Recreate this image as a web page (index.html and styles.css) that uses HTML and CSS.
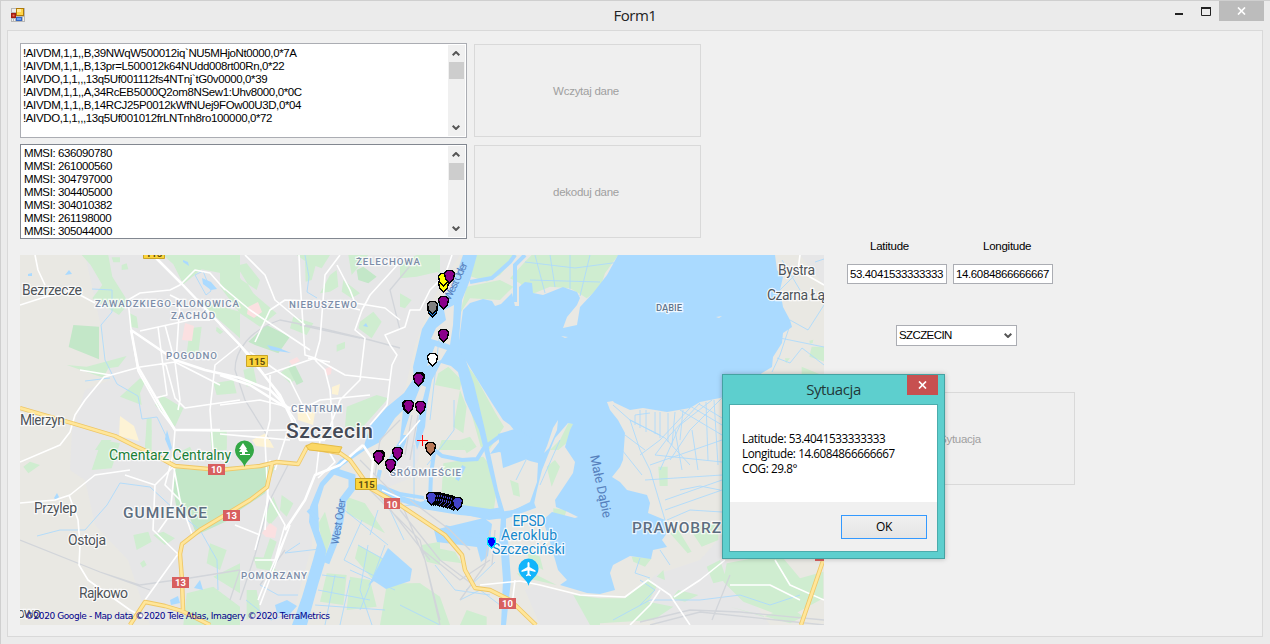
FILE: index.html
```html
<!DOCTYPE html>
<html lang="pl">
<head>
<meta charset="utf-8">
<title>Form1</title>
<link rel="stylesheet" href="styles.css">
</head>
<body>
<div class="window">
  <header class="titlebar">
    <svg class="app-icon" width="14" height="14" viewBox="0 0 14 14"><path fill="#b8b8b8" d="M0 0h14v14H0z"/><path fill="#eee" d="M1 1h4v3H1zM1 11h1v2H1zM3 11h1v2H3zM12 9h1v4h-1z"/><path fill="#a11c10" d="M0 5h5v5H0z"/><path fill="#f26a55" d="M1.500 6.500h2v2h-2z"/><path fill="#b07a08" d="M5 0h8v8H5z"/><path fill="#ffd54a" d="M6 1h6v6H6z"/><path fill="#ffeaa0" d="M6 1h4v3H6z"/><path fill="#3567c4" d="M5 9h6v4H5z"/><path fill="#6fa2ef" d="M6 10h4v2H6z"/></svg>
    <h1 class="title">Form1</h1>
    <div class="controls">
      <svg width="50" height="20" viewBox="0 0 50 20"><path fill="#222" d="M6 12h8v2H6z"/><path fill="none" stroke="#222" d="M32.500 7v7.500h9V7"/><path fill="#222" d="M32 6h10v2H32z"/></svg>
      <span class="close"><svg width="9" height="8" viewBox="0 0 9 8"><path d="M1 .5l7 7M8 .5l-7 7" stroke="#fff" stroke-width="1.700"/></svg></span>
    </div>
  </header>
  <main class="client">
    <section class="left">
      <div class="io-row">
        <div class="box">
          <div class="lines"><p>!AIVDM,1,1,,B,39NWqW500012iq`NU5MHjoNt0000,0*7A</p><p>!AIVDM,1,1,,B,13pr=L500012k64NUdd008rt00Rn,0*22</p><p>!AIVDO,1,1,,,13q5Uf001112fs4NTnj`tG0v0000,0*39</p><p>!AIVDM,1,1,,A,34RcEB5000Q2om8NSew1:Uhv8000,0*0C</p><p>!AIVDM,1,1,,B,14RCJ25P0012kWfNUej9FOw00U3D,0*04</p><p>!AIVDO,1,1,,,13q5Uf001012frLNTnh8ro100000,0*72</p></div>
          <div class="scroll"><svg class="arrow" viewBox="0 0 8 5"><path d="M.7 4.200L4 1l3.300 3.200"/></svg><i class="thumb"></i><svg class="arrow" viewBox="0 0 8 5"><path d="M.7.800L4 4 7.300.8"/></svg></div>
        </div>
        <button class="btn" disabled>Wczytaj dane</button>
      </div>
      <div class="io-row">
        <div class="box list">
          <div class="lines mmsi"><p>MMSI: 636090780</p><p>MMSI: 261000560</p><p>MMSI: 304797000</p><p>MMSI: 304405000</p><p>MMSI: 304010382</p><p>MMSI: 261198000</p><p>MMSI: 305044000</p></div>
          <div class="scroll"><svg class="arrow" viewBox="0 0 8 5"><path d="M.7 4.200L4 1l3.300 3.200"/></svg><i class="thumb"></i><svg class="arrow" viewBox="0 0 8 5"><path d="M.7.800L4 4 7.300.8"/></svg></div>
        </div>
        <button class="btn" disabled>dekoduj dane</button>
      </div>
      <svg class="map" viewBox="20 255 804 370">
        <defs>
          <path id="ship" d="M-3-6H3L5-3 4 2.500 0 6.500-4 2.500-5-3z"/>
        </defs>
        <rect x="20" y="255" width="804" height="370" fill="#e9e8e3"/>
        <!-- built-up areas -->
        <g class="urban">
          <path d="M85 255H460L432 300 415 345 405 390 385 425 340 465 312 500 312 545 290 625H150L128 560 95 525 85 480 70 470 72 430 85 390 110 380 105 345 95 300z"/>
          <path d="M735 520L700 560 655 575 640 590 625 605 660 625H770L745 590 725 560zM525 590L535 585 595 600V625H540z"/>
          <path d="M780 255h20l24 30v-30zM415 405l15 5-12 50-12 20-25 10 5-25z"/>
        </g>
        <!-- parks and meadows -->
        <g transform="translate(20 250) scale(.33333)" class="green">
          <path class="forest" d="M160 225l77 5v98l-91-37z"/>
          <path d="M172 0h90l15 80 50 80-30 35-80-50 30-40-35-60zM140 345l60 5 120-32-25 32-30 5-15 28zM430 15h230v130l-55-75-60-12-55 45-30-60zM530 150l130 35v80zM300 440l60-55 15 10-15 35 5 35zM425 435l65 40-25 55-60-65zM330 190l20 10 5 35-25-5zM510 235l35-5-10 80-35 0zM580 400l60-10 10 40-60 5zM570 550h50v50h-45zM380 505h15v95h-20z"/>
          <path d="M275 22l25 0 0 15-20 0zM305 45l15-5 5 18-20 2zM245 570l30 0-30 30h-20zM590 230l20 15-10 8-12-10z"/>
        </g>
        <g transform="translate(220 250) scale(.33333)" class="green">
          <path d="M0 15h30l70 115 70 60-50 40-60-40L0 110zM35 50l30 40 45 30 10-30-40-50zM255 35l15-15 20 15-15 55-18 5zM330 75l20-15 5 50-25 15-30 5zM370 90l50 40-25 15-30-20zM420 215l40-30 25 30-30 50-40-30zM220 200l60 20-20 35-50-20zM230 15h100l-25 40-40-15zM385 15h60l-50 60zM350 285l25-10v20l-25 10zM380 470l90-35 35 10-80 90-50-5zM180 370l30-25 30 35-30 20zM70 360l30-10 10 50-30 10z"/>
          <path class="forest" d="M140 225l70 35-35 50-70-25-20-10zM410 60l20-10 40 30-25 20-30-10zM205 355l20-10 25 50-20 10z"/>
          <path d="M630 15h30v60l-20-30zM500 500l40-30 20 0-80 75z"/>
        </g>
        <g transform="translate(400 250) scale(.33333)" class="green">
          <path d="M0 40l50-25h55l10 50-65 15-50 5zM0 130l35 20-20 25-15-5zM230 15h120l-50 60-40 20-60-20zM375 35l20-20h260l-40 55-15 45-40 30-15-10-35-20-60-5-60 25-30-35-30-15zM200 110l100-20 40 20-40 40-90-5-30 45zM172 305l55 75 60 110 25 40-45 70-25-10-50-180zM115 370l30-20 40 40-5 30-75-15zM180 420l20 50-10 80-30-20zM125 570h80v30h-90zM505 520l15 0-10 50-35 30h-25l30-30z"/>
        </g>
        <g transform="translate(600 250) scale(.33333)" class="green">
          <path d="M0 15h45L15 65 0 95zM635 290l38 0v45l-45-15zM605 350l60 25h-60zM628 272l12-3-2 10-8 2zM555 325l15 0-12 15z"/>
        </g>
        <g transform="translate(20 430) scale(.33333)" class="green">
          <path class="forest" d="M465 115l195 15v125l-130 60-20-50-40-30-10-55z"/>
          <path d="M245 30l55 10-25 75-60 5zM380 0h15l-5 60-15-10zM480 65l30-15 15 30-30 15zM570 0h50v55l-40-20zM10 110l20-15 30 10-35 25zM340 315l45-10 10 30-45 25zM400 315l30-10 35 20-30 20zM570 340l50 20-20 60-40-20zM500 490l80-20 80 60v55h-170zM580 440l80-40v90zM360 400l12-10 8 15-12 8z"/>
        </g>
        <g transform="translate(220 430) scale(.33333)" class="green">
          <path class="forest" d="M0 110l165 0-30 80-75 50H0z"/>
          <path d="M380 200l55 20 60 90-115-60zM415 345l90 50-50 50-50-60zM320 430l60 5-10 90-70-10zM390 440l60 10 20 80-90 10zM500 465l100-5 60 60v65H480zM315 245l20 75-20 60-20-100zM185 195l35 25-20 40-20-20zM130 260l30-60 20 50-30 35zM150 325l20 10-20 60-20-10zM605 345l55-10v70l-40-10zM80 480h30l10 60-40 30zM100 380l50 5 20 40-60-10z"/>
        </g>
        <g transform="translate(400 430) scale(.33333)" class="green">
          <path d="M130 100l60-10 60-10 15 20 25 80-10 70-80-15-75-50zM0 460h60l60 40 30 85H0zM65 345l100 20 20 35-70-10zM180 30l30-10 20 30-30 20zM360 30l25 40-20 10zM440 110l25-20 15 20-25 60zM330 150l25 10 5 40-20-5zM460 235l40 5-10 30-30-10zM380 360l40 20 10 40-40-20zM520 495l80 10v80h-30zM200 540l60 20v25h-80zM345 250l20 10-15 25zM350 430l60 5 60 30-110-25z"/>
        </g>
        <g transform="translate(600 430) scale(.33333)" class="green">
          <path d="M175 110h28v58h-24zM210 310l25-10 40 65-12 5zM265 290l90-10v50l-50 20zM95 380l60 5-20 25-35-15zM320 410l40-20 20 60-40 10zM0 505h75l70-60 25 25-25 45 75 15-60 40-160 10zM235 480l60 15-40 20-40-10zM380 400l80-15 90 0 50 60 70-20v80l-110 60-130-50-60-60zM390 530l100 30 80-30 40 30-40 20zM170 440l20-20 5 30z"/>
        </g>
        <!-- hospital and shopping areas -->
        <g>
          <path class="pink" d="M185 323l9 3-2 15-10-1zM248 307l10-5 4 10-8 6-7-4zM289 361l8-4 3 4-8 4zM325 369l7-3-1 8-5 2zM262 533l8-10 7 5-2 10-9-1z"/>
          <path class="yellow" d="M120 416l14 10 5 15-20-5zM297 407l18 6-2 12-15-5zM332 387l8-3-2 11-6-1zM252 440l14-7 8 15-18-2z"/>
        </g>
        <!-- lake and rivers -->
        <g class="water">
          <path d="M463 255H477L470 280 462 300 459 340 474 384 485 430 498 490 506 517 506 540 499 545 501 517 489 470 479 430 465 400 458 372 451 366 441 363 432 380 427 405 425 427 417 450 415 440 419 415 422 395 413 408 406 442 392 475 386 463 400 440 403 410 395 418 380 442 365 450 342 466 324 486 318 505 319 530 326 550 325 562 318 585 307 625H292L302 597 313 560 317 545 309 522 310 507 320 483 340 460 363 449 370 426 387 407 404 393 414 378 413 367 422 329 438 303 452 287z"/>
          <path d="M458 348L463 310 470 303 483 299 492 301 495 306 501 304 512 293 515 306H519V287L525 282 532 283 533 293 543 295 563 287 577 292 580 298 577 305 567 317 563 328 577 325 580 307 593 293 607 275 618 255H775L777 270 783 277 780 290 783 307 790 320 792 327 783 333 782 343 773 357 772 367 762 373 735 395 700 402 690 408 667 412 643 408 630 410 613 402 607 402 610 410 618 420 625 433 623 460 620 467 612 477 620 482 627 490 647 495 650 503 648 513 665 520 667 533 662 540 667 547 653 550 651 559 630 556 613 565 610 573 615 590 600 594 587 593 560 585 567 580 558 570 550 542 543 520 552 512 575 518 578 517 568 512 556 507 555 500 573 473 575 462 565 447 570 430 573 424 568 423 555 438 548 455 542 470 537 490 534 504 511 515 498 512 514 510 530 502 537 482 538 463 530 461 515 455 499 452 490 454 500 441 518 435 510 425 503 420 492 403 477 379z"/>
          <path d="M498 434l20-6 15 12-6 19-24 9z"/>
          <path d="M390 509l34-8v-5L400 492 380 484 372 486 382 493zM388 548l24 21-2 12-24 8-12-8-6 5zM400 496l90 13 13-2v11l-14 2-70-15-30 2zM434 530l50-12 8 6-4 32-7 6-4-15-40-5zM500 540h8l3 40-5 45h-5l2-45z"/>
          <path class="river" stroke-width="7" d="M334 471L352 477 352 488 343 500 340 521 334 543 326 563"/>
          <path class="river" stroke-width="6" d="M374 488L395 497 424 506 460 512 505 516 535 505"/>
          <path class="river" stroke-width="4" d="M432 448L442 456 462 460 477 459 484 448 500 436M434 453L431 475 430 500M470 282L492 278 510 262 515 255M515 302V265L525 255M445 527L475 536 490 535M308 510L318 520M380 470L378 479M464 466L457 480"/>
          <path d="M65 275l4-5 3 4zM28 274l4-1v3h-4zM183 260l5 2 1 4-6-4zM202 278l9 4 6 7-6 1-8-6zM267 345l12 3 12 5-20-3zM275 605l12-5 10 6-8 9-12-2zM54 498l3-5 2 4-3 3zM167 430l5 18-2 3-5-12zM170 600l8-4 2 7-9 2zM194 588l6-8 3 10zM363 326l3-3 2 4z"/>
        </g>
        <!-- islands -->
        <g class="land">
          <path d="M436 328l10-8-2-10 10-5-1 20-3 20-8-3-11-3zM427 366l8-20 12 4-6 10zM421 385l5 2-3 12-8 14-6 22-6 0 10-30z"/>
          <path d="M547 446l6-18 5-8-1 10-8 18-5 5zM716 317l6-1-3 2zM607 402l6-1 8 12-9-6zM808 402l6 2 10 15-12-10zM561 336l7 1-3 1z"/>
        </g>
        <!-- streams and canals -->
        <g class="stream">
          <path d="M92 289L112 290 112 312 101 325 105 360 117 384 138 396 142 419 157 417 168 440M85 381L110 378M195 275l8-4 8 20-5 4zM37 536L60 530 85 530 107 505 120 483 150 487 175 510 200 530 217 560 218 590M305 255l4 22-2 15 10 6"/>
          <path d="M342 508L388 545M362 520L344 560 378 578M378 510L370 535M358 545L385 560M350 570L395 590M322 575L345 578M318 590L370 600M315 605L385 610M335 575L325 625M350 580L340 625M368 545L360 590 372 625M385 545L372 580 360 610M300 543L285 553 320 549M260 585l18 10 20 0M246 600l25 20 15-5"/>
          <path d="M404 540L390 510M414 445v60M454 400v30l-15 20-12 15M440 330L430 420M525 262L575 268 620 262M535 255L545 293M550 255L555 287M570 255V289M590 255L580 296M530 280L600 282M466 590L495 562M400 605L440 625M435 565L455 590 490 595M560 555l-15-10M516 480l10-20M540 485l20-45M460 600l20-10 20 15"/>
          <path d="M613 405L630 420 665 438 690 465M630 420L640 450 650 470 665 520M630 420L660 435M650 413L635 415 635 425M660 412V438M668 413V442M675 412L672 445M683 410L680 440M690 408L660 440 640 455M700 403L670 435 655 455M712 400L680 425 660 470M722 398L690 430 670 460M680 410L722 435M690 406L722 425M655 455L722 462M650 465L722 440M645 480L722 475M625 435L645 450M622 450L642 475M665 500L722 480M665 510L722 490M667 520L690 510 722 512M680 490l20-4 20 4M640 410v18M646 410v22M655 412v22M699 404L722 418M706 402L708 460M714 400L718 465M692 430L698 470M675 430L682 470"/>
          <path d="M790 320L808 330 824 305M790 325L780 355 772 372M780 338L824 347M777 358L790 363 802 348 824 365M800 290l-18-30M815 262l9-3M780 290L795 275M613 620L650 600 700 600 740 595 770 605 800 595M640 580l15 10-15 15M640 558l-5 15 15 5M660 550l10 15"/>
        </g>
        <!-- railways -->
        <g class="rail">
          <path d="M20 540L100 572 140 585 190 578 240 570M100 572L150 590M240 570L230 600M235 370C235 350 250 330 280 320L320 328 370 340 400 348M400 330L390 290 415 260M235 370L245 400 270 440M360 460L400 500 425 560 440 625M370 490L420 540 440 620M375 490L430 560M405 455L412 415M410 460L418 415M400 510L440 560 480 590M420 548L460 580 490 560M490 530L485 565 460 600M495 530L492 565M410 500L450 530 470 550M640 622L690 610 740 612 824 620M650 625L700 612 824 625M730 575L712 620M375 475L380 440 400 420"/>
          <path d="M300 325L360 338M285 550L260 585M288 465L270 500 255 555 240 600"/>
        </g>
        <!-- minor streets -->
        <g class="street">
          <path d="M20 305L45 297 65 293 80 295 95 303M35 255L38 270 45 285M20 503L55 500 70 495 95 475 130 470M69 495L78 520 80 545 79 565 88 580 130 610 145 618M80 370L110 375M20 462L60 445 70 432 75 415 85 400 104 377 140 367 175 362 220 385"/>
          <path d="M131 329L138 371 160 410 175 430 173 455 165 485 180 500 193 537M175 430L220 431 290 430M131 329L128 300 140 293 170 290 180 285 195 270 210 273 225 290M140 331L190 320 210 320M165 325L175 362 180 400 178 410M158 327L163 366 167 395 155 398M170 295L180 300 176 362M160 364L166 365 175 398 185 408 240 400M240 345L215 365 210 410 213 450"/>
          <path d="M245 255L265 275 275 300 305 325M299 255L300 280 305 355 315 358 320 340 325 275 340 255M337 265L350 290 355 303 385 308 400 320M362 310L355 330 365 338 360 380 340 400 325 440M362 310L370 295 400 262M220 285L250 310 310 350M220 325L250 355 275 390 295 420 300 440M255 342L270 310 285 300 330 302 360 310M250 352L290 380 310 420M315 358L345 375 390 380M315 358L265 375M315 360L325 370 330 390 333 430M270 375L270 420 265 440 268 500 255 550M220 405L260 400 300 410 320 400 370 395M308 358L330 362M390 380L392 365 397 355 390 345 385 335 405 327 410 310 420 310 430 290 445 275 452 255M390 380L387 405 370 425"/>
          <path d="M175 465L155 485 153 530 178 554 145 600M125 475L155 485M173 463L180 500M175 465L170 515 158 532M288 430L275 470M220 434L290 440M320 440L316 475M268 495L285 525 275 560 255 560M290 525L275 565 260 605M270 460L265 530M288 530L262 590 258 600M235 525L260 535M318 478L335 462 325 445"/>
          <path d="M480 585L520 581 540 585 580 595 625 597 648 580 670 595 690 625M674 597L700 580 725 560M660 590L650 605 630 625M775 560L790 585 824 600M800 255L798 270 824 285M515 580L512 605M730 585L770 585 800 600M399 445L420 420M382 490L400 498"/>
        </g>
        <g class="main">
          <path d="M155 257L182 284 240 345 260 370 280 395 292 420 300 440 325 440M131 330L175 360 205 370 240 378 270 390 290 410M131 330L138 367 160 405 175 430H220M363 445L373 460 370 490M220 375L250 385 290 410M363 445L340 465 315 475 305 500 285 530"/>
        </g>
        <!-- highways -->
        <g class="highway">
          <path id="hw" d="M20 408L75 424 115 436 135 446 155 455 175 466 220 470 260 466 277 462 298 464 307 447 340 453 350 460 370 488 400 505 445 535 462 555 465 570 475 588 490 590 510 600 536 625M272 464L267 487 250 500 200 530 182 544 180 554 182 580 183 610M130 625L145 602 165 606 182 611 210 625M824 558L801 625"/>
          <use class="fill" href="#hw"/>
        </g>
        <path fill="#fbd764" stroke="#e5bc47" d="M306 446l6-3 30 4-3 6-30-3z"/>
        <!-- road numbers -->
        <g class="shield">
          <path fill="#fbd43b" stroke="#c9a52a" d="M143.500 246.500h21v12h-21zM246.500 355.500h21v11h-21zM355.500 478.500h21v11h-21z"/>
          <path fill="#d85f5f" d="M208 464h17v11h-17zM223 510h17v11h-17zM172 577h17v11h-17zM384 498h16v11h-16zM499 598h17v11h-17zM815 552h9v9h-9z"/>
          <g fill="#5d4c11"><text x="154" y="257">115</text><text x="257" y="365">115</text><text x="366.500" y="488">115</text></g>
          <g fill="#fff"><text x="216.500" y="473">10</text><text x="231.500" y="519">13</text><text x="180.500" y="586">13</text><text x="392" y="507.500">10</text><text x="507.500" y="607">10</text></g>
        </g>
        <!-- place pins -->
        <path fill="#34a846" d="M244.500 467c-1-6-9.500-9-9.500-17a9.500 9.500 0 0119 0c0 8-8.500 11-9.500 17z"/><path fill="#fff" d="M243 443l-4 6h2l-2 3h3v2h-2v1h10v-1h-5v-2h3l-2-3h1z"/>
        <path fill="#12b5fb" d="M528.500 586c-1-7-10-9-10-17.500a10 10 0 0120 0c0 8.500-9 10.500-10 17.500z"/><path fill="#fff" d="M527.500 563q1-2 2 0v4l6 3.500v1.500l-6-1.500v3.500l1.500 1.200v1l-2.500-.6-2.500.6v-1l1.500-1.200v-3.500l-6 1.500v-1.500l6-3.500z"/>
        <!-- labels -->
        <g class="place">
          <text x="22" y="294.500" textLength="60">Bezrzecze</text><text x="20" y="425" textLength="45">Mierzyn</text><text x="34" y="512.500" textLength="43">Przylep</text><text x="68" y="544.500" textLength="38">Ostoja</text><text x="79" y="597.500" textLength="49">Rajkowo</text><text x="17" y="618" textLength="24">owo</text><text x="778" y="274.500" textLength="37">Bystra</text><text x="767" y="299.500" textLength="58">Czarna Łą</text>
        </g>
        <g class="district">
          <text x="95" y="307" textLength="144">ZAWADZKIEGO-KLONOWICA</text><text x="171" y="319" textLength="44">ZACHÓD</text><text x="166" y="359" textLength="51">POGODNO</text><text x="289" y="308" textLength="68">NIEBUSZEWO</text><text x="356" y="265" textLength="64">ŻELECHOWA</text><text x="291" y="412" textLength="51">CENTRUM</text><text x="390" y="476" textLength="71">ŚRÓDMIEŚCIE</text><text x="241" y="579" textLength="66">POMORZANY</text>
        </g>
        <text class="lake-name" x="656" y="311" textLength="26">DĄBIE</text>
        <text class="big" x="123" y="518" textLength="84">GUMIEŃCE</text><text class="big" x="632" y="533" textLength="89">PRAWOBRZ</text>
        <text class="city" x="286" y="438" textLength="87">Szczecin</text>
        <text class="place cemetery" x="109" y="460" textLength="122">Cmentarz Centralny</text>
        <g class="place aero"><text x="512.500" y="526" textLength="33">EPSD</text><text x="501" y="540" textLength="56">Aeroklub</text><text x="492" y="554" textLength="73">Szczeciński</text></g>
        <g class="river-name">
          <text transform="translate(338.500 545) rotate(-81)" textLength="46">West Oder</text><text transform="translate(450 301) rotate(-64)" textLength="41">West Oder</text><text class="male" transform="translate(590 456) rotate(78)" textLength="64">Małe Dąbie</text>
        </g>
        <!-- vessels -->
        <g class="vessel" transform="translate(0 .5)">
          <g fill="#ff0"><use href="#ship" x="443.500" y="285"/><use href="#ship" x="443.500" y="279"/></g>
          <g fill="#8b008b"><use href="#ship" x="449.500" y="276"/><use href="#ship" x="443.500" y="302"/><use href="#ship" x="443.500" y="335"/><use href="#ship" x="419.500" y="378"/><use href="#ship" x="418.500" y="379"/><use href="#ship" x="407.500" y="406"/><use href="#ship" x="408.500" y="406"/><use href="#ship" x="420.500" y="407"/><use href="#ship" x="379.500" y="456"/><use href="#ship" x="378.500" y="457"/><use href="#ship" x="397.500" y="453"/><use href="#ship" x="390.500" y="465"/></g>
          <use href="#ship" x="432.500" y="310" fill="#1e90ff"/><use href="#ship" x="432.500" y="307" fill="#808080"/>
          <use href="#ship" x="432.500" y="359" fill="#fff"/>
          <use href="#ship" x="430.500" y="448" fill="#b87858"/>
          <g fill="#4343c9"><use href="#ship" x="453.500" y="503"/><use href="#ship" x="451.500" y="502"/><use href="#ship" x="449.500" y="501"/><use href="#ship" x="447.500" y="501"/><use href="#ship" x="445.500" y="500"/><use href="#ship" x="443.500" y="500"/><use href="#ship" x="441.500" y="499"/><use href="#ship" x="439.500" y="499"/><use href="#ship" x="437.500" y="498"/><use href="#ship" x="435.500" y="498"/><use href="#ship" x="433.500" y="498"/><use href="#ship" x="431.500" y="498"/><use href="#ship" x="457.500" y="503"/></g>
          <path fill="#00f" stroke="#00e0ff" d="M488.500 537h6l1 3-.5 4-3.500 3.500-3.500-3.500-.5-4z"/>
        </g>
        <path stroke="#f00" d="M417 440.500h11M422.500 435v11"/>
        <text class="copyright" x="25" y="618.500" textLength="305">©2020 Google - Map data ©2020 Tele Atlas, Imagery ©2020 TerraMetrics</text>
      </svg>
    </section>
    <aside class="side">
      <div class="coords">
        <label class="field"><span>Latitude</span><b>53.4041533333333</b></label>
        <label class="field"><span class="lon">Longitude</span><b>14.6084866666667</b></label>
      </div>
      <div class="combo"><span>SZCZECIN</span><svg class="arrow" viewBox="0 0 8 5"><path d="M.7.800L4 4 7.300.8"/></svg></div>
      <button class="btn" disabled>Sytuacja</button>
    </aside>
  </main>
</div>
<div class="dialog">
  <div class="dialog-title"><span>Sytuacja</span><i class="dialog-close"><svg width="9" height="8" viewBox="0 0 9 8"><path d="M1 .5l7 7M8 .5l-7 7" stroke="#fff" stroke-width="1.700"/></svg></i></div>
  <div class="dialog-body">
    <div class="message"><p>Latitude: 53.4041533333333</p><p>Longitude: 14.6084866666667</p><p>COG: 29.8°</p></div>
    <div class="actions"><button class="ok">OK</button></div>
  </div>
</div>
</body>
</html>
```
FILE: styles.css
```css
* { box-sizing: border-box; margin: 0; padding: 0; }
body {
  position: relative;
  width: 1270px;
  height: 644px;
  overflow: hidden;
  font: 11.5px/13px "Liberation Sans", sans-serif;
  letter-spacing: -.3px;
  color: #000;
}
.window {
  width: 1270px;
  height: 644px;
  background: #ebebeb;
  border-top: 1px solid #cfcfcf;
  border-left: 1px solid #cfcfcf;
  padding: 0 7px 7px 6px;
}
.titlebar { display: grid; grid-template-columns: 1fr auto 1fr; height: 29px; }
.app-icon { margin: 7px 0 0 4px; }
.title { font: 400 15px/29px "Open Sans", sans-serif; letter-spacing: -.5px; color: #222; }
.controls { display: flex; justify-content: flex-end; margin-right: -1px; }
.close { display: flex; align-items: center; justify-content: center; width: 45px; height: 20px; background: #bcbcbc; }
.client {
  display: flex;
  height: 607px;
  background: #f0f0f0;
  border: 1px solid #d9d9d9;
  padding: 12px 0 0 12px;
}
.left { width: 804px; }
.io-row { display: flex; gap: 7px; align-items: center; margin-bottom: 6px; }
.box { display: flex; justify-content: space-between; width: 447px; height: 95px; background: #fff; border: 1px solid #abadb3; padding: 1px; overflow: hidden; }
.box.list { border-color: #828790; }
.lines { padding: 2px 0 0 1px; white-space: nowrap; letter-spacing: -.38px; }
.lines.mmsi { padding: 1px 0 0 2px; letter-spacing: -.4px; }
.scroll { display: flex; flex-direction: column; align-items: center; width: 17px; background: #f0f0f0; padding: 6px 1px 6px 0; }
.scroll .arrow:last-child { margin-top: auto; }
.arrow { width: 8px; height: 5px; fill: none; stroke: #555; stroke-width: 2; }
.thumb { width: 15px; height: 17px; margin-top: 6px; background: #cdcdcd; }
.btn { width: 227px; height: 93px; padding: 2px 3px 0 0; background: #efefef; border: 1px solid #d9d9d9; color: #a0a0a0; font: 11.5px/13px "Liberation Sans", sans-serif; letter-spacing: -.27px; }
.map { display: block; width: 804px; height: 370px; margin-top: 16px; font-family: Roboto, sans-serif; letter-spacing: 0; }
.side { padding: 197px 0 0 23px; }
.coords { display: flex; gap: 6px; }
.field { display: block; width: 100px; }
.field span { display: block; padding-left: 23px; margin-bottom: 11px; letter-spacing: -.25px; }
.field .lon { padding-left: 30px; }
.field b { display: block; height: 20px; border: 1px solid #abadb3; background: #fff; padding: 3px 0 0 2px; font-weight: 400; letter-spacing: -.38px; }
.combo { display: flex; justify-content: space-between; align-items: center; width: 121px; height: 21px; margin: 41px 0 46px 49px; padding: 0 4px 1px 2px; border: 1px solid #abadb3; background: #fff; letter-spacing: -.6px; }
.side .btn { margin-left: 1px; }

.urban { fill: #e6e6e7; }
.green { fill: #cfedd0; }
.forest { fill: #c3e7c8; }
.pink { fill: #fbe0e1; }
.yellow { fill: #fdf3d5; }
.water { fill: #aadaff; }
.river { fill: none; stroke: #aadaff; }
.land { fill: #e9e8e3; }
.stream { fill: none; stroke: #aedafc; stroke-width: .9; }
.rail { fill: none; stroke: #d2d5da; stroke-width: 1.3; }
.street, .main { fill: none; stroke: #fff; stroke-width: 1.6; stroke-linejoin: round; }
.main { stroke-width: 2.5; }
.highway { fill: none; stroke: #efc767; stroke-width: 4.4; stroke-linejoin: round; }
.highway .fill { stroke: #ffe69a; stroke-width: 2.7; }
.shield text { font-size: 9.5px; font-weight: 700; text-anchor: middle; }
.place, .district, .big, .city, .lake-name { paint-order: stroke; stroke: #fff; stroke-opacity: .8; stroke-width: 2.4px; }
.place { font-size: 14px; fill: #4d5358; }
.district { font-size: 9.7px; font-weight: 500; fill: #7c8da8; }
.lake-name { font-size: 9.5px; font-weight: 500; fill: #60758e; }
.big { font-size: 15.5px; font-weight: 500; fill: #5e6e80; }
.city { font-size: 21px; font-weight: 500; fill: #454b57; }
.cemetery { fill: #198038; }
.aero { fill: #1789cd; }
.river-name { font-size: 11px; fill: #5680bd; }
.male { font-size: 13px; }
.vessel { stroke: #000; stroke-width: 1.3; stroke-linejoin: miter; shape-rendering: crispEdges; }
.copyright { font: 9px "DejaVu Sans", sans-serif; fill: #00008b; }

.dialog {
  position: absolute;
  left: 722px;
  top: 374px;
  width: 223px;
  height: 185px;
  background: #5dcfce;
  border: 1px solid #45a2a2;
  padding: 0 6px 6px;
  box-shadow: 0 0 5px rgba(0, 0, 0, .25);
}
.dialog-title { display: flex; position: relative; justify-content: center; height: 29px; font: 15px/29px "Open Sans", sans-serif; letter-spacing: -.4px; color: #223838; }
.dialog-close { display: flex; position: absolute; right: 0; top: 0; align-items: center; justify-content: center; width: 31px; height: 20px; background: #c75050; }
.dialog-body { height: 148px; border: 1px solid #4bacac; background: #f0f0f0; }
.message { height: 97px; padding: 26px 0 0 12px; background: #fff; font: 11.7px/15px "Open Sans", sans-serif; letter-spacing: -.42px; }
.actions { display: flex; justify-content: flex-end; padding: 13px 10px 0 0; }
.ok { width: 86px; height: 24px; padding-bottom: 2px; border: 1px solid #3399ff; background: linear-gradient(#f0f0f0, #e5e5e5); font: 12px "Open Sans", sans-serif; letter-spacing: -.3px; }
```
